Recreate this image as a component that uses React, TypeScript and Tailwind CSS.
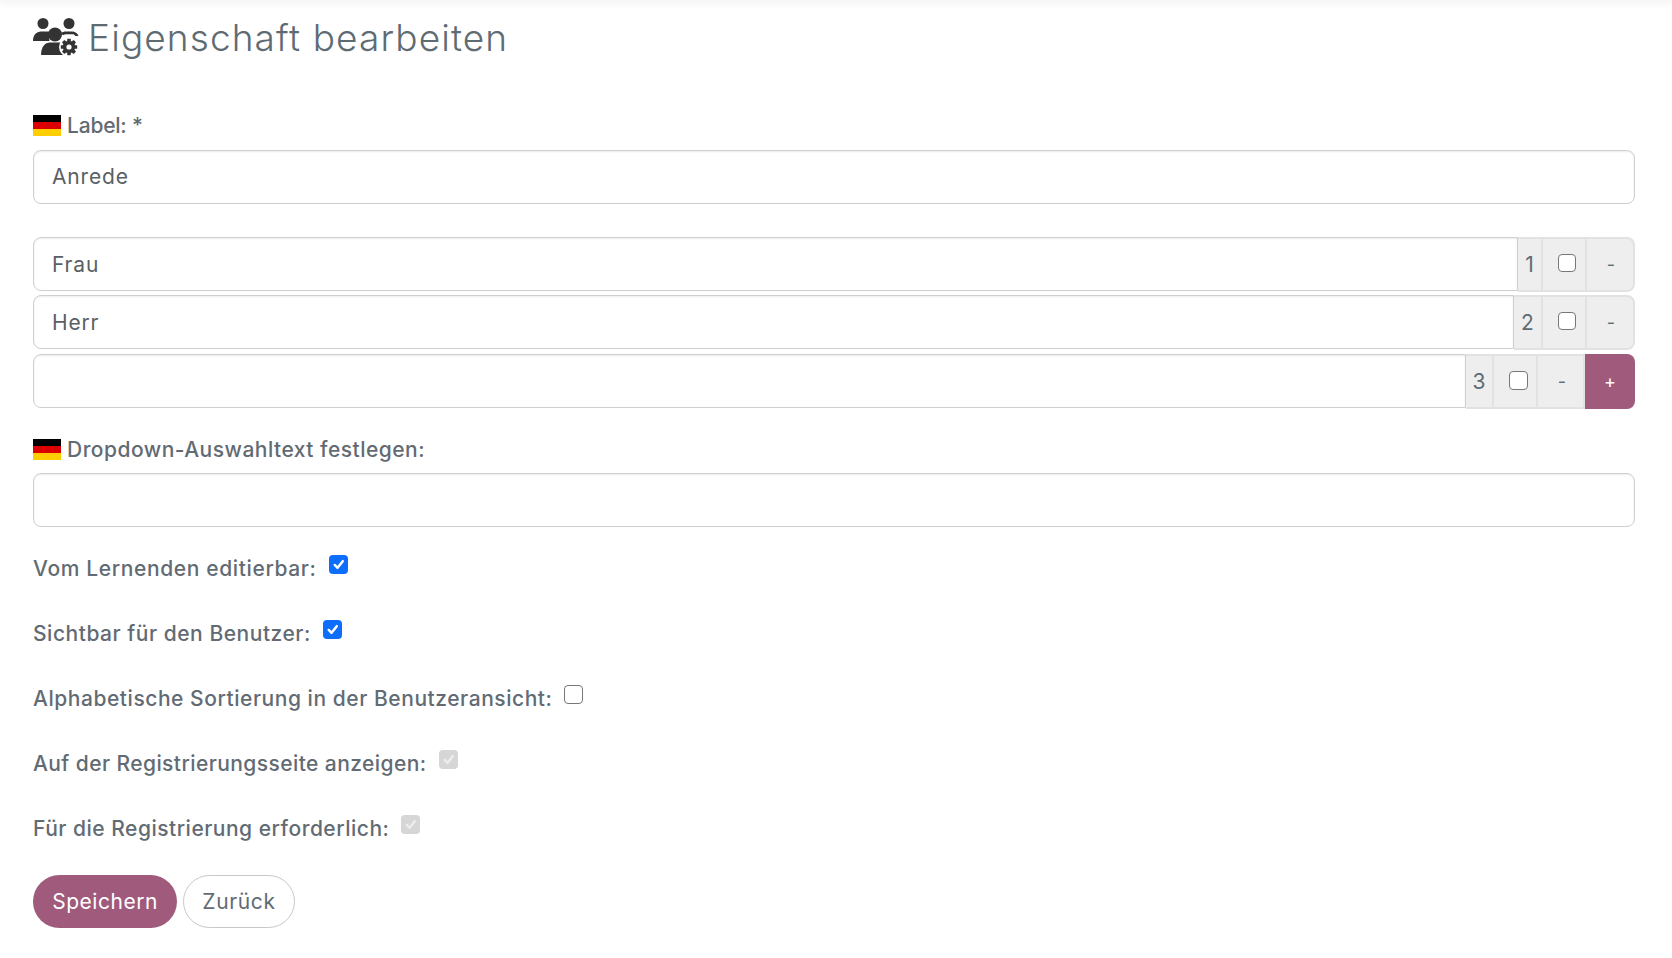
import React from "react";

const font = { fontFamily: '"Inter", "Noto Sans", sans-serif' };

function UsersCogIcon() {
  const teeth = [0, 45, 90, 135, 180, 225, 270, 315];
  return (
    <svg viewBox="0 0 46 38" className="h-[38px] w-[46px] shrink-0" aria-hidden="true">
      <g fill="#333333">
        <circle cx="10" cy="5.5" r="5.5" />
        <circle cx="36" cy="5.5" r="5.5" />
        <path d="M0 23c0-6 3.5-9.5 8-9.5h6c1.600 0 3 .4 4.200 1.200C16.500 17 16 20 16.500 23z" />
        <path d="M28 15c1.500-1 3-1.500 5-1.500h6c3 0 5.500 1.600 6.500 4.500h-3c-1-1.300-2-1.700-3.500-1.700h-6c-1 0-2 .3-3 .9z" />
        <circle cx="22" cy="16.500" r="7" />
        <path d="M8 37c0-8 4-12.500 9-12.500h10c3 0 5.500 1 7 3v9.500z" />
      </g>
      <circle cx="36" cy="29" r="10" fill="#ffffff" />
      <g fill="#333333">
        {teeth.map((a) => (
          <rect key={a} x="34.200" y="20.800" width="3.600" height="4" rx="0.6" transform={`rotate(${a} 36 29)`} />
        ))}
        <circle cx="36" cy="29" r="6.200" />
      </g>
      <circle cx="36" cy="29" r="2.600" fill="#ffffff" />
    </svg>
  );
}

function Flag() {
  return (
    <span className="mr-[6px] -mt-[2px] flex h-[21px] w-[28px] flex-col">
      <span className="flex-1 bg-black" />
      <span className="flex-1 bg-[#dd0000]" />
      <span className="flex-1 bg-[#ffce00]" />
    </span>
  );
}

function Box({ state, size = "w-[19px] h-[19px]" }: { state: "on" | "off" | "disabled"; size?: string }) {
  if (state === "off")
    return <span className={`${size} block rounded-[4px] border border-[#777] bg-white`} />;
  const bg = state === "on" ? "bg-[#0d6efd]" : "bg-[#d6d6d6]";
  const stroke = state === "on" ? "#ffffff" : "#ececec";
  return (
    <span className={`${size} flex items-center justify-center rounded-[4px] ${bg}`}>
      <svg viewBox="0 0 20 20" className="h-full w-full" fill="none">
        <path d="M6 10.500l3 3 5.500-7" stroke={stroke} strokeWidth="2.600" strokeLinecap="round" strokeLinejoin="round" />
      </svg>
    </span>
  );
}

function Cell({ w, children, last }: { w: string; children: React.ReactNode; last?: boolean }) {
  return (
    <div
      className={`${w} flex shrink-0 items-center justify-center border-y-2 border-r-2 border-[#e2e2e2] bg-[#eeeeee] text-[#5f6b73] ${
        last ? "rounded-r-[8px] border-r-0" : ""
      }`}
    >
      {children}
    </div>
  );
}

function OptionRow({
  value, n, nW, boxW, minusW, plus, boxSize, mb, minusShift,
}: {
  value: string; n: string; nW: string; boxW: string; minusW: string; plus?: boolean; boxSize?: string; mb: string; minusShift: string;
}) {
  return (
    <div className={`flex h-[55px] ${mb}`}>
      <input
        readOnly
        value={value}
        className="h-[54px] min-w-0 flex-1 rounded-l-[8px] border border-[#cfcfcf] bg-white px-[18px] text-[21px] tracking-[0.04em] text-[#5a5f64] shadow-[inset_0_1px_2px_rgba(0,0,0,0.08)] outline-none"
        style={font}
      />
      <Cell w={nW}><span className="text-[21px]">{n}</span></Cell>
      <Cell w={boxW}><span className="-mt-[3px] ml-[6px]"><Box state="off" size={boxSize} /></span></Cell>
      <Cell w={minusW} last={!plus}><span className={`text-[18px] ${minusShift}`}>-</span></Cell>
      {plus && (
        <div className="flex w-[50px] shrink-0 items-center justify-center rounded-r-[8px] bg-[#a05a7c] text-[18px] text-white">+</div>
      )}
    </div>
  );
}

function CheckRow({ label, state, tracking }: { label: string; state: "on" | "off" | "disabled"; tracking: string }) {
  return (
    <div className="mb-[35px] flex h-[30px] items-center">
      <span className={`text-[21px] font-medium leading-[30px] text-[#626b73] ${tracking}`}>{label}</span>
      <span className="ml-[12px] -mt-[9px]"><Box state={state} /></span>
    </div>
  );
}

export default function App() {
  return (
    <div className="min-h-[958px] bg-white text-[#626b73]" style={font}>
      <div className="h-0 shadow-[0_0_8px_1px_rgba(0,0,0,0.2)]" />
      <div className="pl-[33px] pr-[37px] pt-[18px]">
        <div className="flex h-[38px] items-center">
          <UsersCogIcon />
          <h1 className="ml-[9px] text-[37px] font-light leading-none tracking-[0.03em] text-[#5f6b73]">Eigenschaft bearbeiten</h1>
        </div>

        <div className="mt-[59px] flex h-[22px] items-center">
          <Flag />
          <span className="text-[21px] font-medium tracking-[-0.01em]">Label: *</span>
        </div>
        <input
          readOnly
          value="Anrede"
          className="mt-[13px] block h-[54px] w-full rounded-[8px] border border-[#cfcfcf] bg-white px-[18px] pb-[2px] text-[21px] tracking-[0.04em] text-[#5a5f64] shadow-[inset_0_1px_2px_rgba(0,0,0,0.08)] outline-none"
          style={font}
        />

        <div className="mt-[33px]">
          <OptionRow value="Frau" n="1" nW="w-[25px]" boxW="w-[44px]" minusW="w-[48px]" boxSize="w-[18px] h-[18px]" mb="mb-[3px]" minusShift="ml-[2px]" />
          <OptionRow value="Herr" n="2" nW="w-[29px]" boxW="w-[44px]" minusW="w-[48px]" boxSize="w-[18px] h-[18px]" mb="mb-[4px]" minusShift="ml-[2px]" />
          <OptionRow value="" n="3" nW="w-[28px]" boxW="w-[44px]" minusW="w-[47px]" plus boxSize="w-[19px] h-[19px]" mb="" minusShift="ml-[3px]" />
        </div>

        <div className="mt-[30px] flex h-[22px] items-center">
          <Flag />
          <span className="text-[21px] font-medium tracking-[0.023em]">Dropdown-Auswahltext festlegen:</span>
        </div>
        <input
          readOnly
          value=""
          className="mt-[12px] block h-[54px] w-full rounded-[8px] border border-[#cfcfcf] bg-white px-[18px] shadow-[inset_0_1px_2px_rgba(0,0,0,0.08)] outline-none"
        />

        <div className="mt-[27px]">
          <CheckRow label="Vom Lernenden editierbar:" state="on" tracking="tracking-[0.03em]" />
          <CheckRow label="Sichtbar für den Benutzer:" state="on" tracking="tracking-[0.025em]" />
          <CheckRow label="Alphabetische Sortierung in der Benutzeransicht:" state="off" tracking="tracking-[0.026em]" />
          <CheckRow label="Auf der Registrierungsseite anzeigen:" state="disabled" tracking="tracking-[0.02em]" />
          <CheckRow label="Für die Registrierung erforderlich:" state="disabled" tracking="tracking-[0.024em]" />
        </div>

        <div className="-mt-[4px] flex gap-[6px]">
          <button className="h-[53px] w-[144px] rounded-full bg-[#a05a7c] text-[21px] tracking-[0.025em] text-white" style={font}>Speichern</button>
          <button className="h-[53px] w-[112px] rounded-full border border-[#c8c8c8] bg-white text-[21px] tracking-[0.03em] text-[#626b73]" style={font}>Zurück</button>
        </div>
      </div>
    </div>
  );
}
